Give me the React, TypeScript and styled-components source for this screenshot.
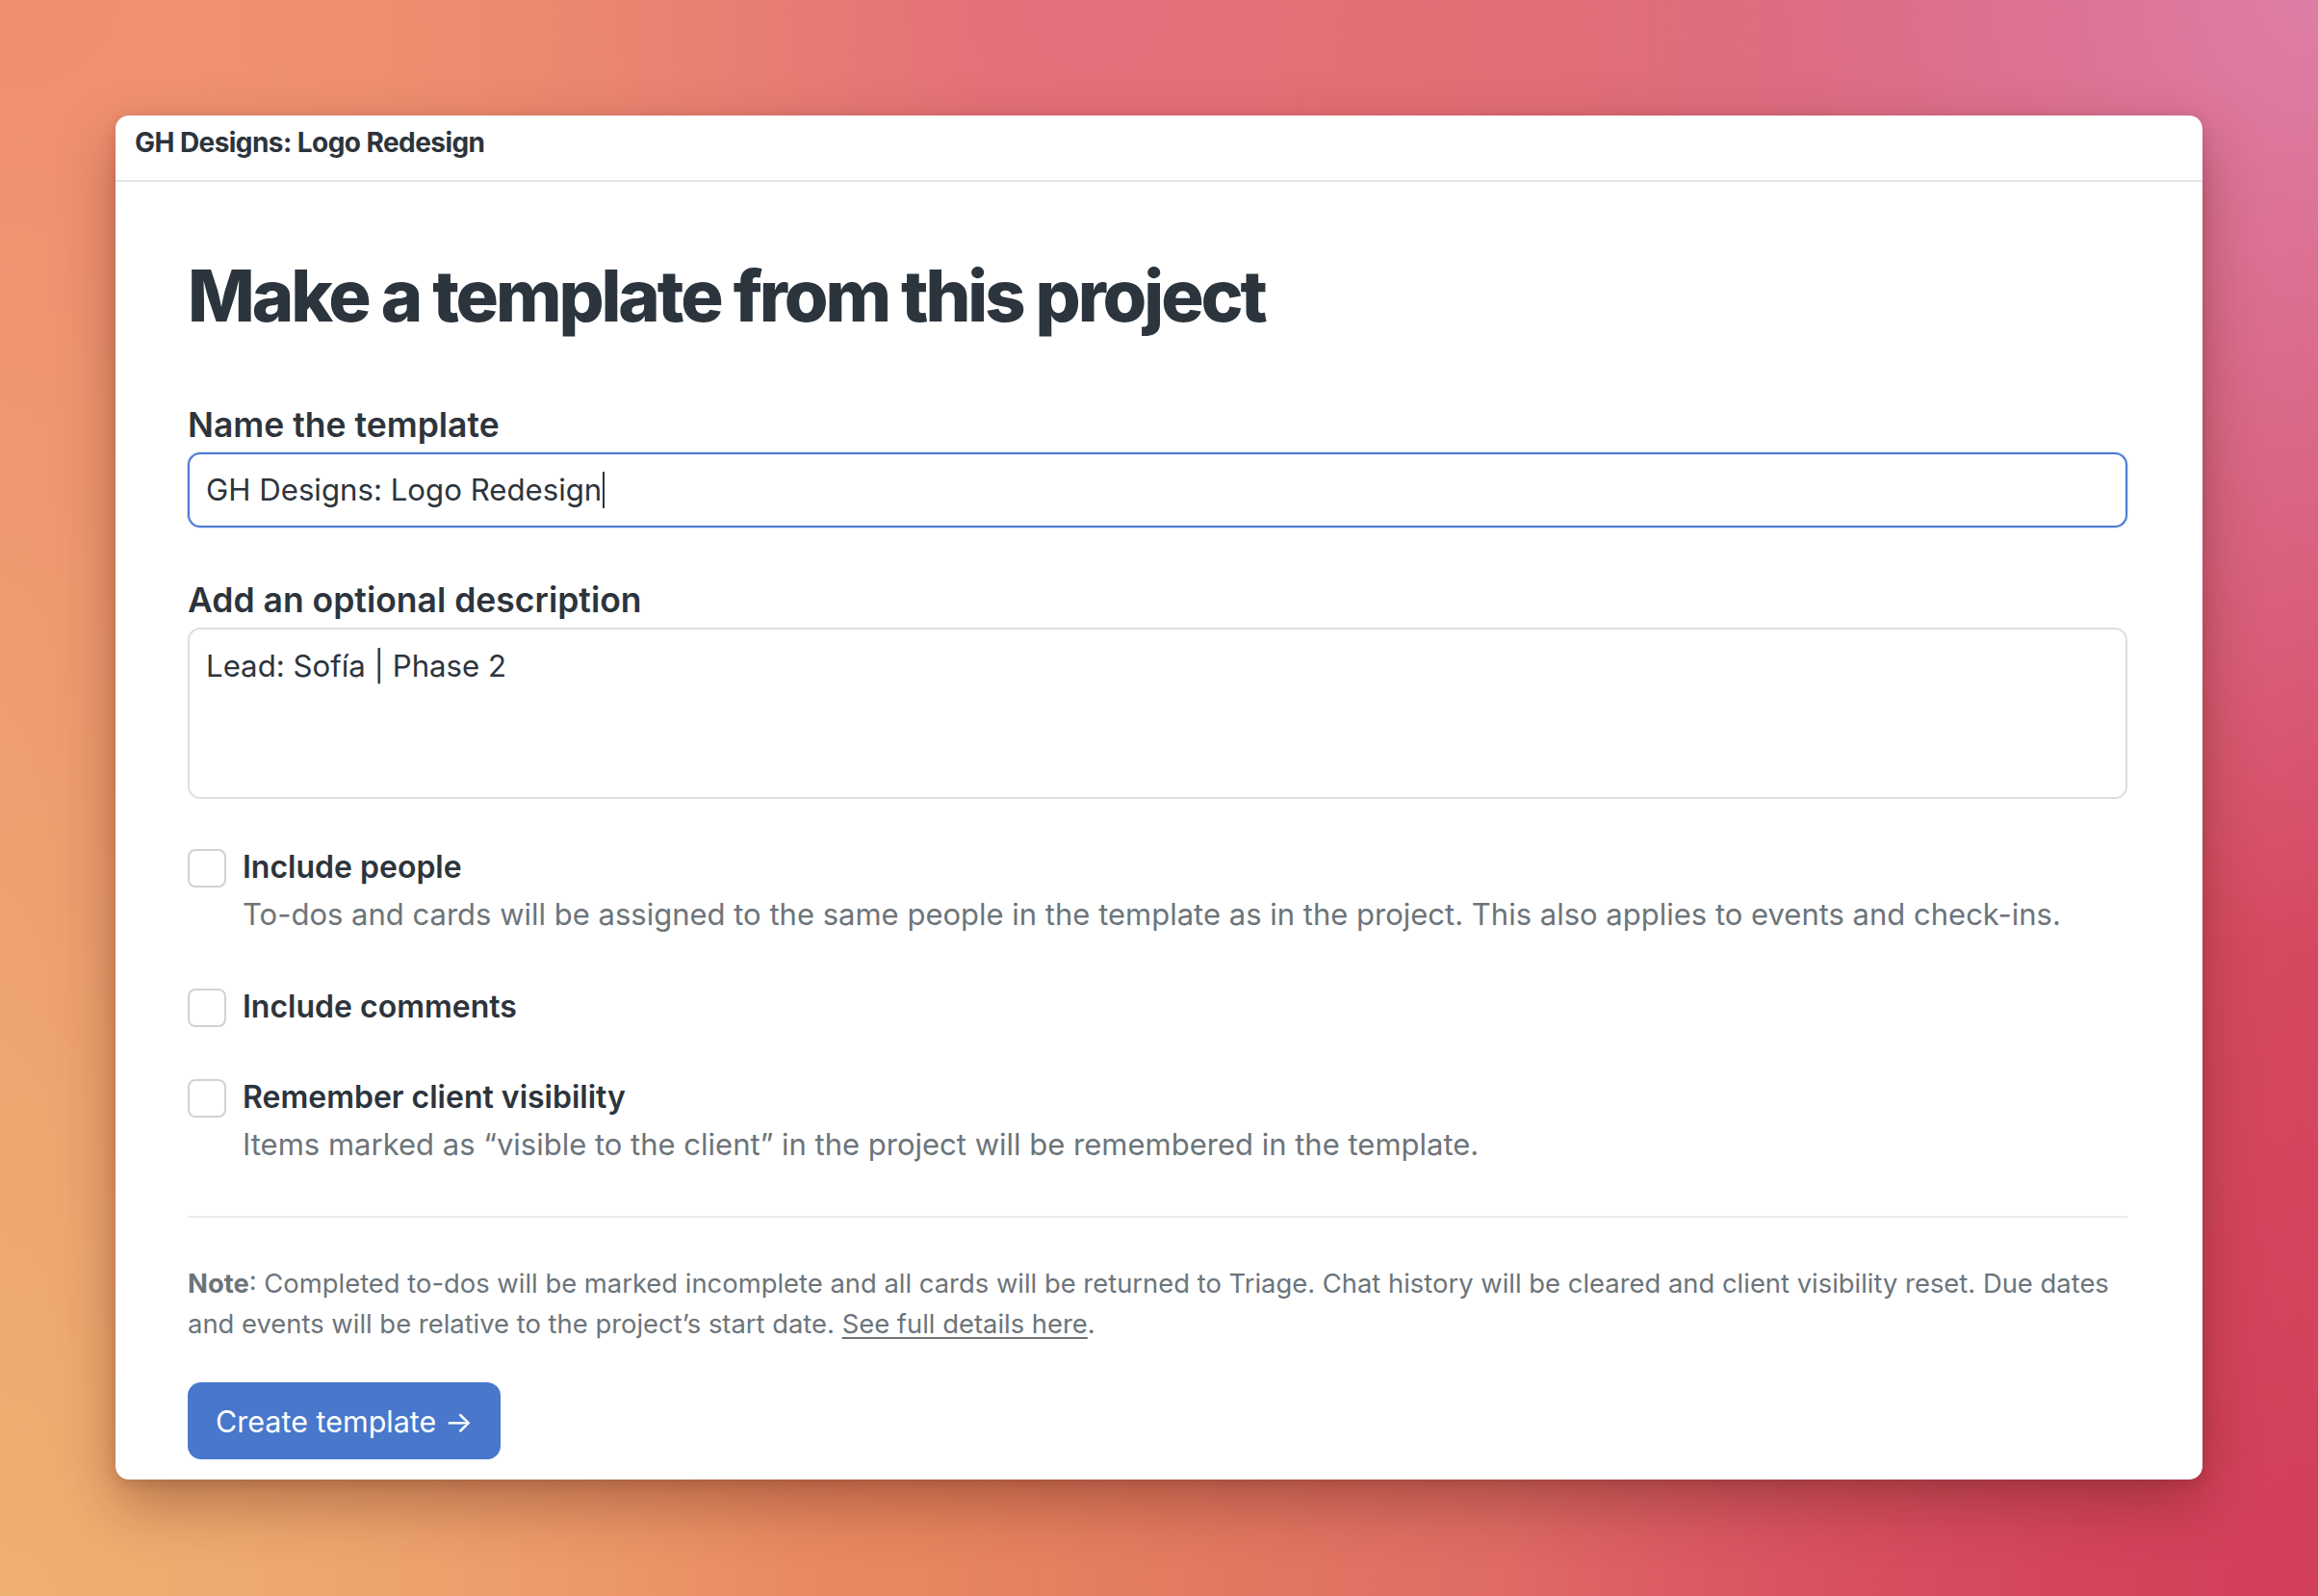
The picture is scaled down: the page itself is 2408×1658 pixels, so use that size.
import styled, { createGlobalStyle } from "styled-components";

const GlobalStyle = createGlobalStyle`
  html, body {
    margin: 0;
    padding: 0;
  }
  body {
    min-height: 1658px;
    font-family: Inter, "Noto Sans", sans-serif;
    color: #2d343c;
    background-color: #e57c68;
    background-image:
      radial-gradient(ellipse 42% 55% at 0% 0%, rgba(240, 142, 114, 1), rgba(240, 142, 114, 0)),
      radial-gradient(ellipse 38% 55% at 47% 0%, rgba(229, 110, 126, 1), rgba(229, 110, 126, 0)),
      radial-gradient(ellipse 42% 60% at 100% 0%, rgba(222, 126, 166, 1), rgba(222, 126, 166, 0)),
      radial-gradient(ellipse 35% 60% at 100% 100%, rgba(211, 62, 90, 1), rgba(211, 62, 90, 0)),
      radial-gradient(ellipse 35% 45% at 0% 100%, rgba(240, 176, 112, 1), rgba(240, 176, 112, 0)),
      linear-gradient(to right, #eea270 0%, #e7865f 40%, #dc6066 75%, #d64c62 100%);
  }
`;

const Page = styled.div`
  padding: 120px 120px 0 120px;
`;

const Window = styled.div`
  background: #ffffff;
  border-radius: 14px;
  height: 1417px;
  overflow: hidden;
  box-shadow: 0 26px 60px rgba(90, 30, 20, 0.38), 0 4px 14px rgba(90, 30, 20, 0.18);
`;

const TitleBar = styled.div`
  box-sizing: border-box;
  height: 69px;
  border-bottom: 2px solid #e6e6e6;
  padding: 11px 20px 0;
  font-size: 28px;
  line-height: 34px;
  font-weight: 700;
  letter-spacing: -0.02em;
`;

const Body = styled.div`
  padding: 0 78px 0 75px;
`;

const Heading = styled.h1`
  margin: 78px 0 71px;
  font-size: 74px;
  line-height: 81px;
  font-weight: 800;
  letter-spacing: -0.042em;
  color: #2c353e;
`;

const Field = styled.div`
  display: flex;
  flex-direction: column;
  & + & {
    margin-top: 53px;
  }
`;

const Label = styled.label`
  font-size: 35.5px;
  font-weight: 600;
  line-height: 46px;
  margin-bottom: 5px;
`;

const TextInput = styled.div<{ $focused?: boolean; $tall?: boolean }>`
  box-sizing: border-box;
  height: ${(p) => (p.$tall ? "178px" : "78px")};
  border: 2px solid ${(p) => (p.$focused ? "#4a7bd4" : "#dedede")};
  border-radius: 13px;
  box-shadow: ${(p) => (p.$focused ? "0 0 0 1px rgba(74, 123, 212, 0.22)" : "none")};
  padding: ${(p) => (p.$tall ? "17px 17px" : "0 17px")};
  display: flex;
  align-items: ${(p) => (p.$tall ? "flex-start" : "center")};
  font-size: 31.2px;
  line-height: 42px;
  color: #2d343c;
`;

const Caret = styled.span`
  display: inline-block;
  width: 2px;
  height: 38px;
  background: #2d343c;
  margin-left: 1px;
`;

const Options = styled.div`
  margin-top: 49px;
  display: flex;
  flex-direction: column;
  gap: 50px;
`;

const Option = styled.div`
  display: grid;
  grid-template-columns: 40px 1fr;
  column-gap: 17px;
  align-items: start;
`;

const Box = styled.span`
  box-sizing: border-box;
  width: 40px;
  height: 40px;
  border: 2px solid #d0d2d4;
  border-radius: 8px;
  margin-top: 3px;
`;

const OptionTitle = styled.div`
  font-size: 32px;
  font-weight: 600;
  line-height: 44px;
`;

const OptionHint = styled.div`
  margin-top: 3px;
  font-size: 31px;
  color: #6c747a;
  line-height: 48px;
`;

const Divider = styled.hr`
  border: 0;
  border-top: 2px solid #ececec;
  margin: 50px 0 47px;
`;

const Note = styled.p`
  margin: 0 0 40px;
  font-size: 27.4px;
  line-height: 42px;
  color: #6c747a;
  b {
    font-weight: 700;
  }
  a {
    color: inherit;
    text-decoration: underline;
    text-underline-offset: 4px;
  }
`;

const PrimaryButton = styled.button`
  height: 80px;
  padding: 0 29px;
  border: 0;
  border-radius: 14px;
  background: #4877cc;
  color: #ffffff;
  font-family: inherit;
  font-size: 30.5px;
  cursor: pointer;
`;

type OptionItem = { title: string; hint?: string };

const options: OptionItem[] = [
  {
    title: "Include people",
    hint: "To-dos and cards will be assigned to the same people in the template as in the project. This also applies to events and check-ins.",
  },
  { title: "Include comments" },
  {
    title: "Remember client visibility",
    hint: "Items marked as \u201cvisible to the client\u201d in the project will be remembered in the template.",
  },
];

export default function App() {
  return (
    <>
      <GlobalStyle />
      <Page>
        <Window>
          <TitleBar>GH Designs: Logo Redesign</TitleBar>
          <Body>
            <Heading>Make a template from this project</Heading>
            <Field>
              <Label>Name the template</Label>
              <TextInput $focused>
                GH Designs: Logo Redesign
                <Caret />
              </TextInput>
            </Field>
            <Field>
              <Label>Add an optional description</Label>
              <TextInput $tall>Lead: Sofía | Phase 2</TextInput>
            </Field>
            <Options>
              {options.map((o) => (
                <Option key={o.title}>
                  <Box />
                  <div>
                    <OptionTitle>{o.title}</OptionTitle>
                    {o.hint && <OptionHint>{o.hint}</OptionHint>}
                  </div>
                </Option>
              ))}
            </Options>
            <Divider />
            <Note>
              <b>Note</b>: Completed to-dos will be marked incomplete and all cards will be returned to Triage. Chat
              history will be cleared and client visibility reset. Due dates and events will be relative to the
              project’s start date. <a href="#">See full details here</a>.
            </Note>
            <PrimaryButton>Create template →</PrimaryButton>
          </Body>
        </Window>
      </Page>
    </>
  );
}
